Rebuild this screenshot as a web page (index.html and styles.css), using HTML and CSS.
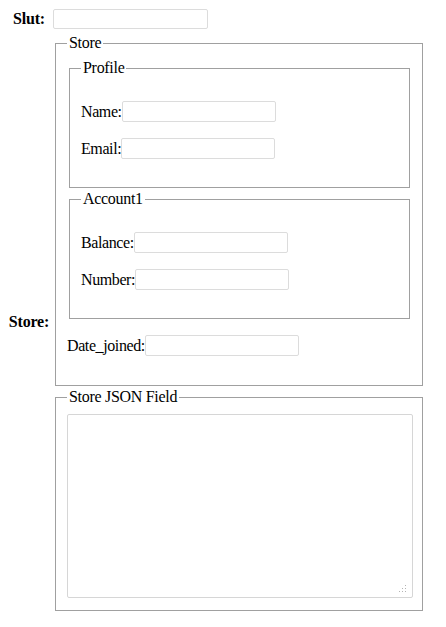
FILE: index.html
```html
<!DOCTYPE html>
<html>
<head>
<meta charset="utf-8">
<link rel="stylesheet" href="styles.css">
</head>
<body>
<div class="form">
  <label class="th">Slut:</label>
  <div class="slut-cell"><input class="text slut" type="text"></div>
  <label class="th">Store:</label>
  <div class="stack">
    <fieldset class="fs outer">
      <legend>Store</legend>
      <fieldset class="fs">
        <legend>Profile</legend>
        <div class="row"><label>Name:</label><input class="text" type="text"></div>
        <div class="row"><label>Email:</label><input class="text" type="text"></div>
      </fieldset>
      <fieldset class="fs">
        <legend>Account1</legend>
        <div class="row"><label>Balance:</label><input class="text" type="text"></div>
        <div class="row"><label>Number:</label><input class="text" type="text"></div>
      </fieldset>
      <div class="row"><label>Date_joined:</label><input class="text" type="text"></div>
    </fieldset>
    <fieldset class="fs">
      <legend>Store JSON Field</legend>
      <div class="ta-wrap">
        <textarea class="ta"></textarea>
        <svg class="grip" width="8" height="8" viewBox="0 0 8 8"><rect x="6" y="0" width="1" height="1"/><rect x="3" y="3" width="1" height="1"/><rect x="6" y="3" width="1" height="1"/><rect x="0" y="6" width="1" height="1"/><rect x="3" y="6" width="1" height="1"/><rect x="6" y="6" width="1" height="1"/></svg>
      </div>
    </fieldset>
  </div>
</div>
</body>
</html>
```
FILE: styles.css
```css
body {
  margin: 8px;
  font-family: "Liberation Serif", "Times New Roman", serif;
  font-size: 16px;
  color: #000;
  background: #fff;
}
.form {
  display: grid;
  grid-template-columns: 42px 372px;
  column-gap: 3px;
  row-gap: 2px;
}
.th {
  font-weight: bold;
  text-align: center;
  align-self: center;
  letter-spacing: -0.2px;
}
.slut-cell {
  padding: 1px 0;
}
.text {
  display: block;
  box-sizing: border-box;
  width: 154px;
  height: 21px;
  margin: 0;
  padding: 0 2px;
  border: 1px solid #dcdcdc;
  border-radius: 2px;
  background: #fff;
  font: 13px "Liberation Sans", Arial, sans-serif;
}
.text.slut {
  width: 155px;
  height: 20px;
}
.fs {
  margin: 0 2px;
  padding: 8px 10px 12px 11px;
  border: 1px solid #a0a0a0;
  min-width: 0;
}
.fs.outer {
  padding-top: 7px;
  padding-bottom: 13px;
}
.fs + .fs {
  margin-top: 2px;
}
.stack > .fs:first-child {
  margin-top: 2px;
}
legend {
  padding: 0 2px;
  line-height: 18px;
  letter-spacing: -0.3px;
}
.row {
  display: flex;
  align-items: center;
  height: 21px;
  margin: 16px 0;
  letter-spacing: -0.4px;
}
.ta-wrap {
  position: relative;
}
.ta {
  display: block;
  box-sizing: border-box;
  width: 346px;
  height: 184px;
  margin: 0;
  border: 1px solid #d6d6d6;
  border-radius: 2px;
  resize: none;
  background: #fff;
}
.grip {
  position: absolute;
  right: 5px;
  bottom: 5px;
  fill: #b4b4b4;
}
```
